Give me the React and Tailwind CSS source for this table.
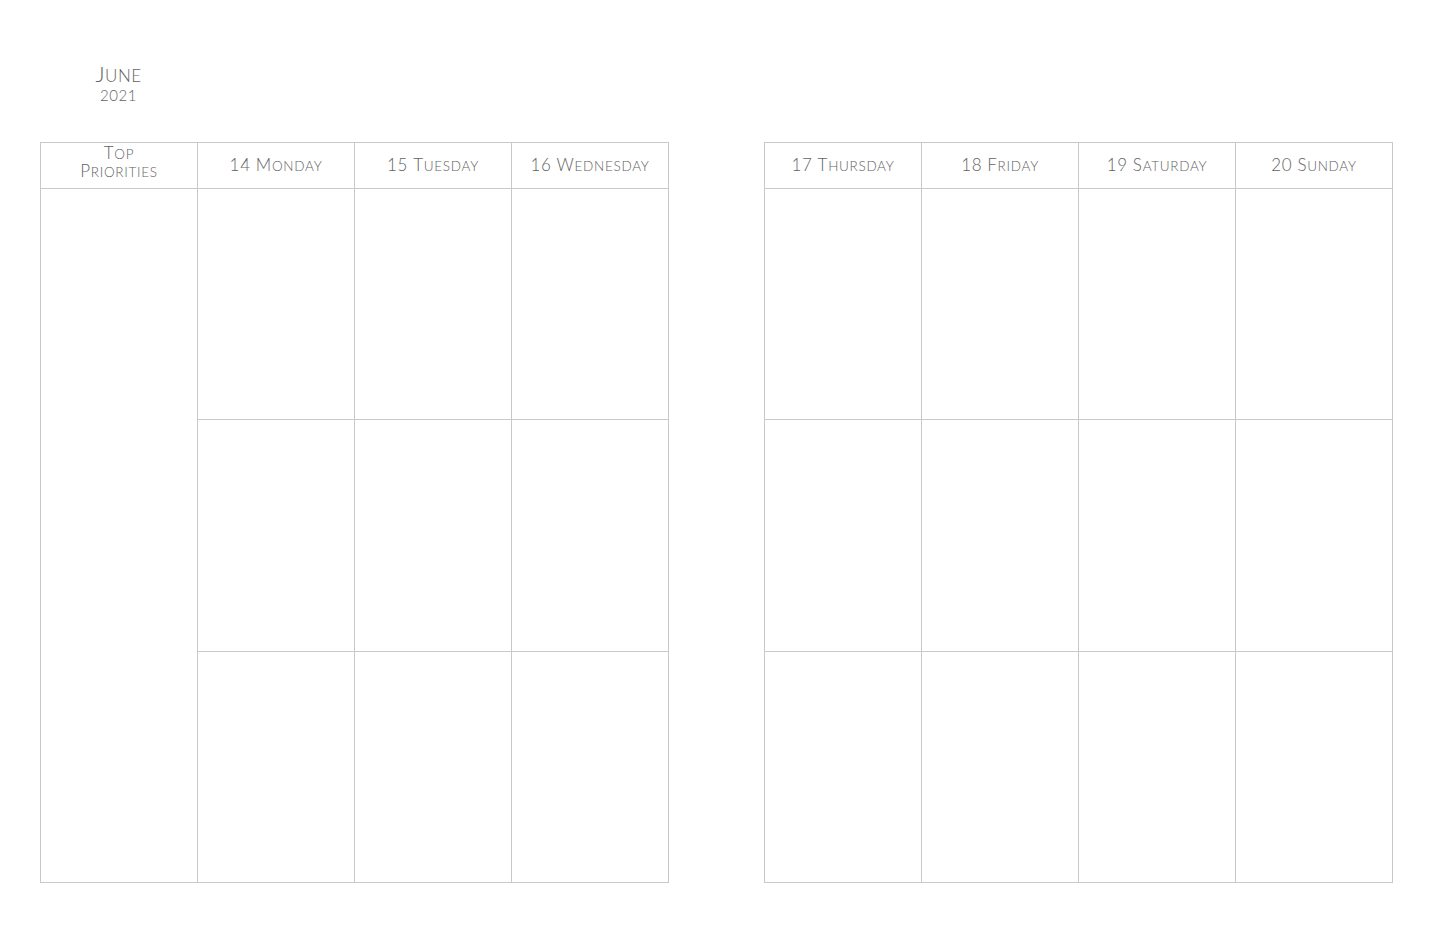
const leftDays = ["14 Monday", "15 Tuesday", "16 Wednesday"];
const rightDays = ["17 Thursday", "18 Friday", "19 Saturday", "20 Sunday"];
const rowHeights = ["h-[231px]", "h-[232px]", "h-[231px]"];

// hand-made small caps: first letter of each word full size, rest smaller uppercase
const Caps = ({ text, big = "text-[17px]", small = "text-[13.5px]" }) => (
  <span>
    {text.split(" ").map((w, i) => (
      <span key={i}>
        {i > 0 && " "}
        {/^\d/.test(w) ? (
          <span className={big}>{w}</span>
        ) : (
          <>
            <span className={big}>{w[0]}</span>
            <span className={`${small} uppercase`}>{w.slice(1)}</span>
          </>
        )}
      </span>
    ))}
  </span>
);

const HeadCell = ({ children }) => (
  <div className="h-[46px] border-r border-b border-[#c9c9c9] flex items-center justify-center text-center leading-[19px] text-[#626262] tracking-[0.7px]">
    {children}
  </div>
);

const Cell = ({ className = "" }) => (
  <div className={`border-r border-b border-[#c9c9c9] ${className}`} />
);

const LeftPage = () => (
  <div className="w-[629px] border-l border-t border-[#c9c9c9] grid grid-cols-[157px_157px_157px_157px] grid-rows-[46px_231px_232px_231px]">
    <HeadCell>
      <div className="-mt-[6px] flex flex-col">
        <div className="h-[19px] leading-[18px] overflow-visible">
          <Caps text="Top" />
        </div>
        <div className="-mt-[1px] h-[19px] leading-[18px] overflow-visible">
          <Caps text="Priorities" />
        </div>
      </div>
    </HeadCell>
    {leftDays.map((d) => (
      <HeadCell key={d}>
        <Caps text={d} />
      </HeadCell>
    ))}
    <Cell className="row-span-3" />
    {rowHeights.map((h, r) =>
      leftDays.map((d) => <Cell key={d + r} className={h} />)
    )}
  </div>
);

const RightPage = () => (
  <div className="w-[629px] border-l border-t border-[#c9c9c9] grid grid-cols-[157px_157px_157px_157px] grid-rows-[46px_231px_232px_231px]">
    {rightDays.map((d) => (
      <HeadCell key={d}>
        <Caps text={d} />
      </HeadCell>
    ))}
    {rowHeights.map((h, r) =>
      rightDays.map((d) => <Cell key={d + r} className={h} />)
    )}
  </div>
);

export default function App() {
  return (
    <div className="min-h-screen w-[1445px] bg-white pl-[40px] pt-[63px] font-['Lato','Liberation_Sans',sans-serif] font-light">
      <div className="w-[157px] h-[42px] text-center text-[#626262] tracking-[0.5px]">
        <div className="h-[22px] leading-[22px]">
          <Caps text="June" big="text-[22px]" small="text-[17px]" />
        </div>
        <div className="h-[20px] text-[15px] leading-[20px]">2021</div>
      </div>
      <div className="mt-[37px] flex gap-[95px]">
        <LeftPage />
        <RightPage />
      </div>
    </div>
  );
}
